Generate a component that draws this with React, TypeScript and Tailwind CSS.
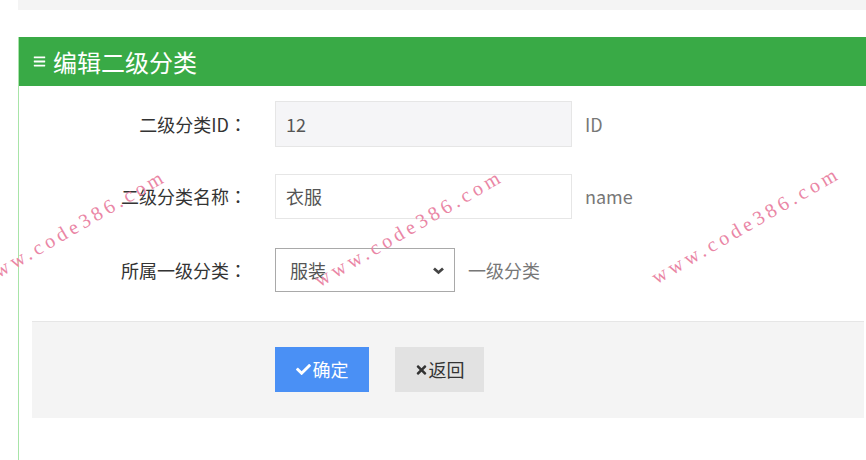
import { FaBars, FaCheck, FaTimes } from 'react-icons/fa';

const font = { fontFamily: '"Noto Sans CJK SC", "Noto Sans", sans-serif' };

// watermark overlay, sits over the form
const Watermark = ({ className }: { className: string }) => (
  <div
    className={`absolute origin-bottom-left -rotate-[30deg] whitespace-nowrap text-[20px] leading-none tracking-[4px] text-[#ea86a5] ${className}`}
    style={{ fontFamily: '"Liberation Serif", serif' }}
  >
    www.code386.com
  </div>
);

const Row = ({ label, children }: { label: string; children: React.ReactNode }) => (
  <div className="flex items-center">
    <div className="w-[256px] pr-[28px] text-right text-[18px] text-[#333]">
      {label}
      <span style={{ fontFamily: '"Noto Sans CJK TC", sans-serif' }}>：</span>
    </div>
    {children}
  </div>
);

export default function App() {
  return (
    <div className="relative w-[866px] h-[460px] overflow-hidden bg-white" style={font}>
      {/* top strip */}
      <div className="ml-[18px] h-[10px] bg-[#f4f4f4]" />

      {/* panel */}
      <div className="mt-[27px] ml-[18px] h-[423px] border-l border-[#a8e4a8]">
        <div className="flex h-[49px] items-center gap-[7px] bg-[#39aa46] pl-[14px] text-white">
          <FaBars className="w-[13px] h-[13px]" />
          <span className="text-[24px] leading-none">编辑二级分类</span>
        </div>

        <div className="pt-[15px]">
          <Row label="二级分类ID">
            <div className="flex h-[46px] w-[297px] items-center border border-[#e6e6e6] bg-[#f5f5f7] pl-[10px] text-[18px] text-[#555]">
              12
            </div>
            <span className="ml-[13px] text-[18px] text-[#777]">ID</span>
          </Row>

          <div className="mt-[27px]">
            <Row label="二级分类名称">
              <div className="flex h-[45px] w-[297px] items-center border border-[#e6e6e6] bg-white pl-[10px] text-[18px] text-[#555]">
                衣服
              </div>
              <span className="ml-[13px] text-[18px] text-[#777]">name</span>
            </Row>
          </div>

          <div className="mt-[29px]">
            <Row label="所属一级分类">
              <div className="flex h-[44px] w-[180px] items-center justify-between border border-[#a9a9a9] bg-white pl-[14px] pr-[9px] text-[18px] text-[#555]">
                <span>服装</span>
                <svg width="13" height="9" viewBox="0 0 13 9" fill="none">
                  <path d="M2 2.5 L6.5 6.5 L11 2.5" stroke="#444" strokeWidth="2.8" />
                </svg>
              </div>
              <span className="ml-[13px] text-[18px] text-[#777]">一级分类</span>
            </Row>
          </div>
        </div>

        {/* footer */}
        <div className="mt-[29px] ml-[13px] mr-[2px] h-[97px] border-t border-[#e6e6e6] bg-[#f4f4f4] pl-[243px] pt-[25px]">
          <div className="flex gap-[26px]">
            <button className="flex h-[45px] w-[94px] items-center justify-center gap-[2px] bg-[#4a90f5] text-[18px] text-white">
              <FaCheck className="w-[15px] h-[15px]" />
              确定
            </button>
            <button className="flex h-[45px] w-[89px] items-center justify-center gap-[1px] bg-[#e2e2e2] text-[18px] text-[#333]">
              <FaTimes className="w-[13px] h-[14px]" />
              返回
            </button>
          </div>
        </div>
      </div>

      <Watermark className="left-[-16px] top-[270px]" />
      <Watermark className="left-[321px] top-[270px]" />
      <Watermark className="left-[658px] top-[267px]" />
    </div>
  );
}
